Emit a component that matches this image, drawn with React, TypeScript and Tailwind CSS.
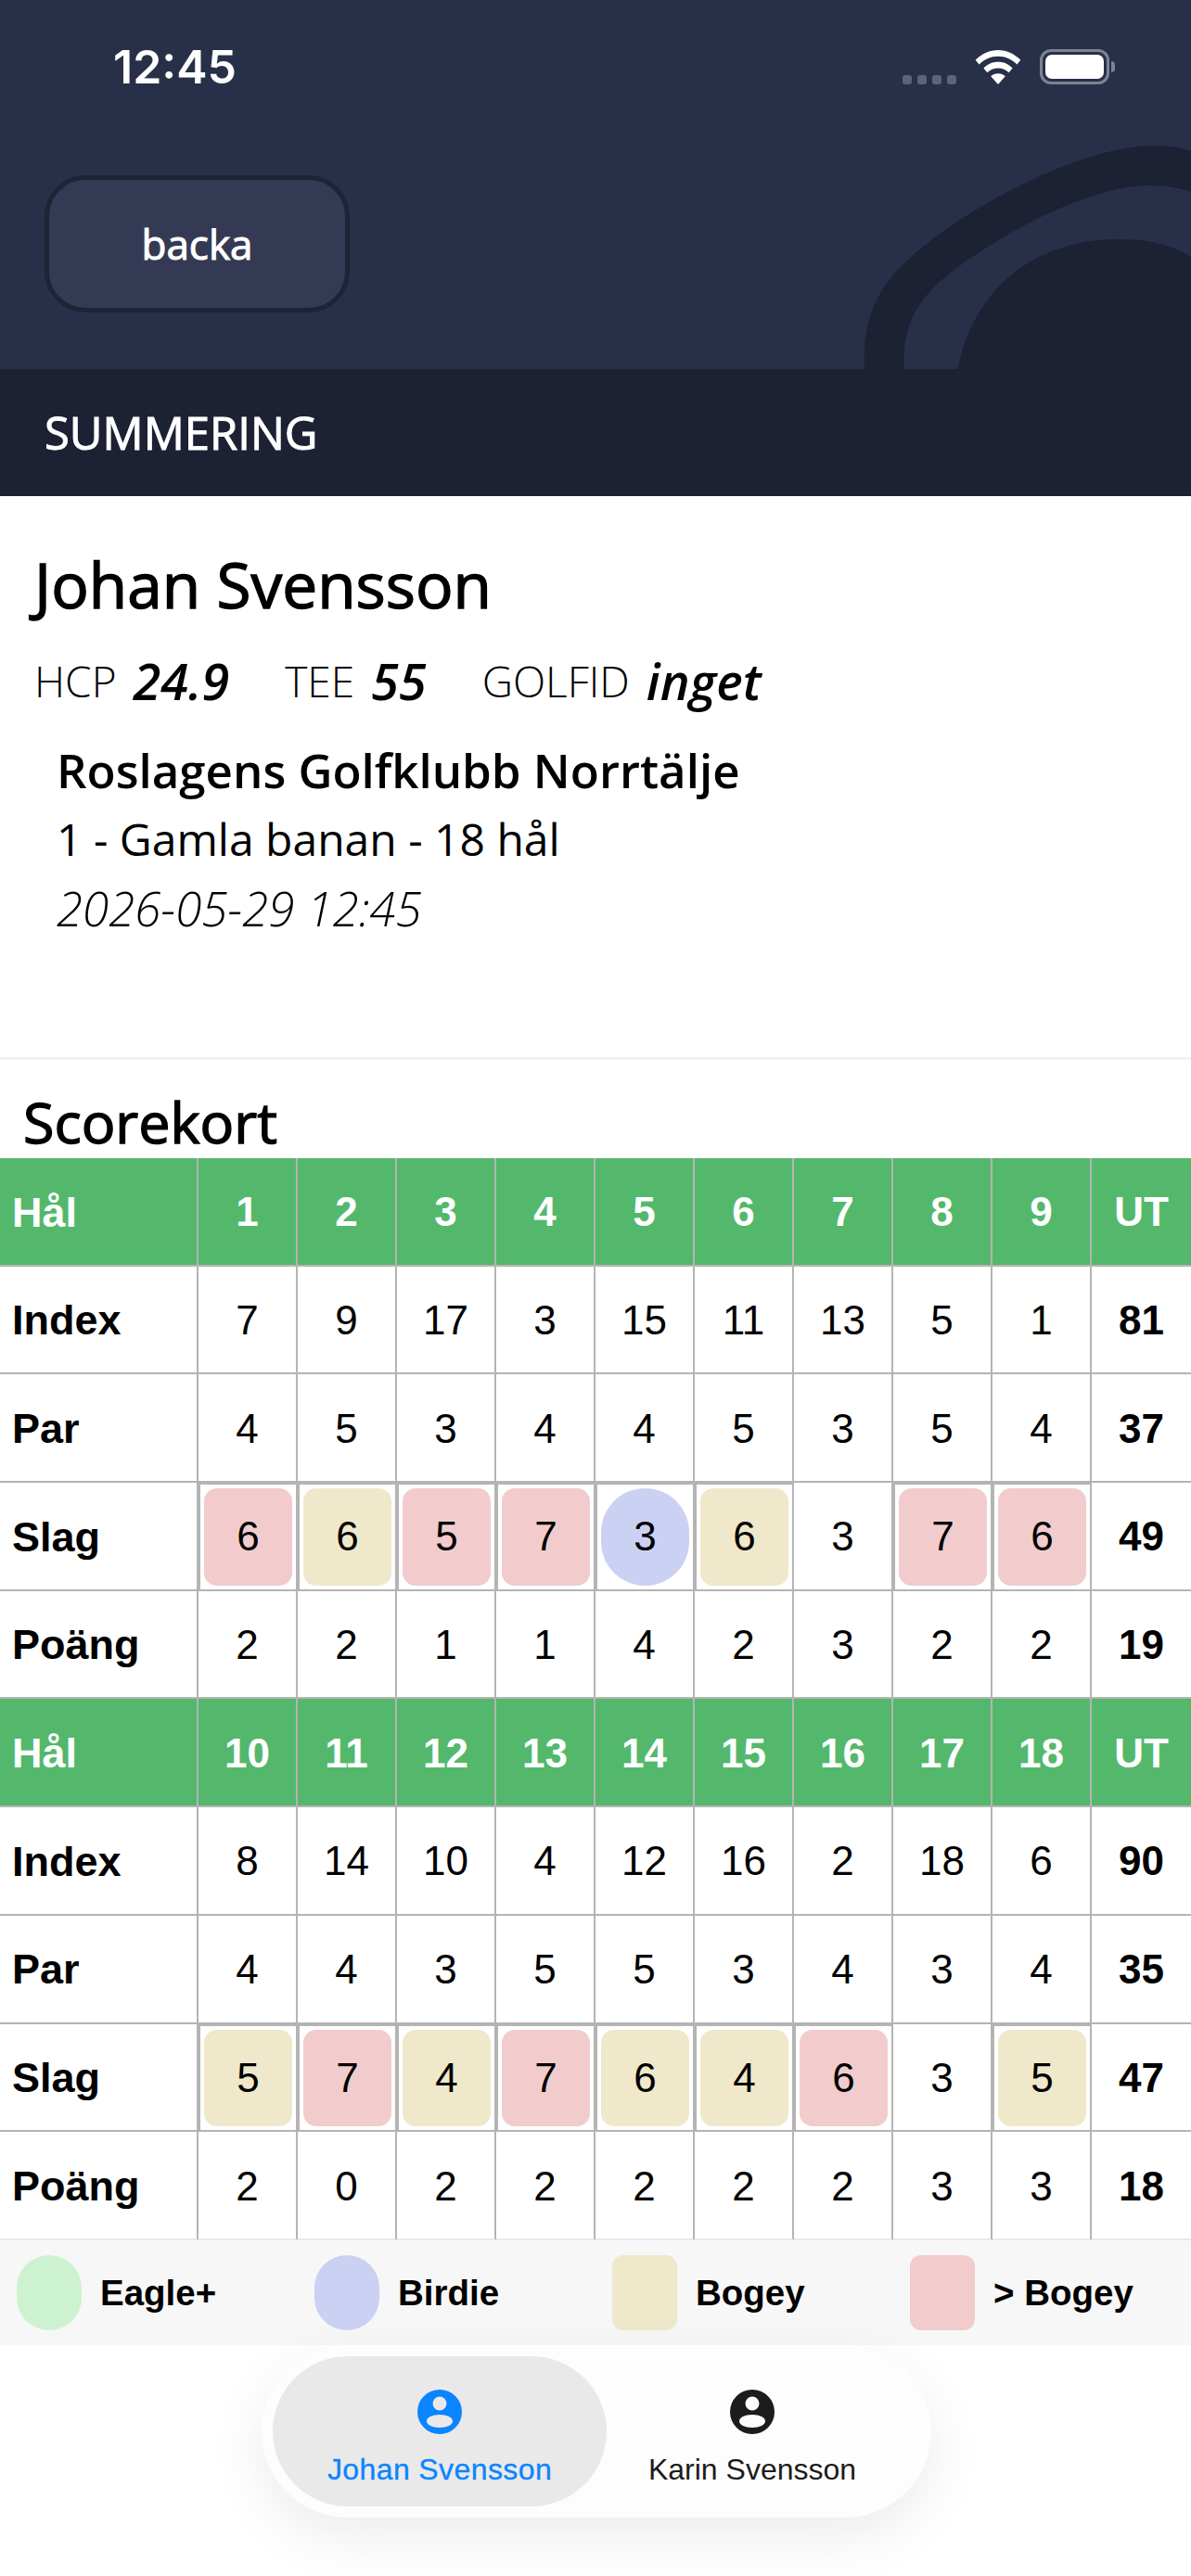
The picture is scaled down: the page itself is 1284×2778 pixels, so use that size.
import React from "react";

const sans = "font-['Open_Sans',sans-serif]";
const helv = "font-['Liberation_Sans',Arial,sans-serif]";
// the reference uses a medium cut that the regular face only reaches with a hairline stroke
const medium = "[-webkit-text-stroke:1px_currentColor]";
const mediumLarge = "[-webkit-text-stroke:1.4px_currentColor]";

type Mark = "r" | "b" | "c" | "";

const nines = [
  {
    holes: ["1", "2", "3", "4", "5", "6", "7", "8", "9", "UT"],
    index: ["7", "9", "17", "3", "15", "11", "13", "5", "1", "81"],
    par: ["4", "5", "3", "4", "4", "5", "3", "5", "4", "37"],
    slag: ["6", "6", "5", "7", "3", "6", "3", "7", "6", "49"],
    marks: ["r", "b", "r", "r", "c", "b", "", "r", "r", ""] as Mark[],
    points: ["2", "2", "1", "1", "4", "2", "3", "2", "2", "19"],
  },
  {
    holes: ["10", "11", "12", "13", "14", "15", "16", "17", "18", "UT"],
    index: ["8", "14", "10", "4", "12", "16", "2", "18", "6", "90"],
    par: ["4", "4", "3", "5", "5", "3", "4", "3", "4", "35"],
    slag: ["5", "7", "4", "7", "6", "4", "6", "3", "5", "47"],
    marks: ["b", "r", "b", "r", "b", "b", "r", "", "b", ""] as Mark[],
    points: ["2", "0", "2", "2", "2", "2", "2", "3", "3", "18"],
  },
];

const rowClass = "grid h-[116.7px] grid-cols-[214px_repeat(9,107px)_1fr]";

function Row({ label, values, head, last }: { label: string; values: string[]; head?: boolean; last?: boolean }) {
  const line = last ? "border-b-[#e8e8e8]" : "";
  return (
    <div className={`${rowClass} ${head ? "bg-[#54b86c] text-white" : "bg-white text-black"}`}>
      <div className={`flex items-center border-r-2 border-b-2 border-[#b4b4b4] pt-[2px] pl-[13px] text-[45px] font-bold ${line}`}>{label}</div>
      {values.map((v, i) => (
        <div
          key={i}
          className={`flex items-center justify-center border-b-2 border-[#b4b4b4] pt-[2px] text-[44px] ${line} ${i < 9 ? "border-r-2" : ""} ${i === 9 || head ? "font-bold" : ""}`}
        >
          {v}
        </div>
      ))}
    </div>
  );
}

function SlagRow({ values, marks }: { values: string[]; marks: Mark[] }) {
  return (
    <div className={`${rowClass} bg-white text-black`}>
      <div className="flex items-center border-r-2 border-b-2 border-[#b4b4b4] pt-[2px] pl-[13px] text-[45px] font-bold">Slag</div>
      {values.map((v, i) => {
        const m = marks[i];
        if (i === 9) {
          return (
            <div key={i} className="flex items-center justify-center border-b-2 border-[#b4b4b4] pt-[2px] text-[44px] font-bold">
              {v}
            </div>
          );
        }
        if (!m) {
          return (
            <div key={i} className="flex items-center justify-center border-r-2 border-b-2 border-[#b4b4b4] pt-[2px] text-[44px]">
              {v}
            </div>
          );
        }
        return (
          <div key={i} className="border-2 border-[#b4b4b4] p-[4px] text-[44px]">
            <div
              className={`flex h-full items-center justify-center ${
                m === "r" ? "rounded-[14px] bg-[#f2cccc]" : m === "b" ? "rounded-[14px] bg-[#f0e8ca]" : "rounded-full bg-[#cbd1f2]"
              }`}
            >
              {v}
            </div>
          </div>
        );
      })}
    </div>
  );
}

function LegendItem({ label, shape }: { label: string; shape: string }) {
  return (
    <div className="flex items-center gap-[20px] pl-[18px]">
      <div className={`h-[81px] w-[70px] ${shape}`} />
      <span className="text-[38.5px] font-bold text-black">{label}</span>
    </div>
  );
}

function PersonIcon() {
  return (
    <svg width="48" height="48" viewBox="0 0 48 48" fill="currentColor" fillRule="evenodd">
      <path d="M24 0 A24 24 0 1 1 24 48 A24 24 0 1 1 24 0 Z M24 7.5 A7.5 7.5 0 1 0 24 22.5 A7.5 7.5 0 1 0 24 7.5 Z M24 27 C16 27 10 30 10 34 C10 38 16 41 24 41 C32 41 38 38 38 34 C38 30 32 27 24 27 Z" />
    </svg>
  );
}

function Tab({ label, active }: { label: string; active?: boolean }) {
  return (
    <div
      className={`flex h-[162px] shrink-0 flex-col items-center justify-start rounded-[81px] pt-[36px] ${
        active ? "w-[360px] bg-[#e9e9e9] text-[#0a84ff]" : "w-[314px] text-[#1c1c1c]"
      }`}
    >
      <PersonIcon />
      <span className={`mt-[19px] text-[32px] leading-[38px] ${active ? "tracking-[0.4px] [-webkit-text-stroke:0.3px_currentColor]" : ""}`}>{label}</span>
    </div>
  );
}

export default function App() {
  return (
    <div className={`relative h-[2778px] w-[1284px] overflow-hidden bg-white ${sans}`}>
      {/* header */}
      <div className="relative h-[398px] overflow-hidden bg-[#283049]">
        <svg className="absolute right-0 bottom-0" width="384" height="258" viewBox="900 140 384 258" fill="#1c2133">
          <path d="M932 398 C930 340 945 305 1000 262 C1060 215 1170 157 1245 157 C1260 157 1272 159 1284 163 L1284 207 C1270 202 1255 200 1240 200 C1180 200 1090 245 1030 290 C990 320 972 350 975 398 Z" />
          <path d="M1033 398 C1042 340 1090 258 1207 258 C1240 258 1265 265 1284 277 L1284 398 Z" />
        </svg>
        <div className="relative flex h-[146px] items-start justify-between pt-[44px] pr-[82px] pl-[122px]">
          <span className="font-['Inter',sans-serif] text-[50px] leading-[56px] font-semibold text-white">12:45</span>
          <div className="flex items-start gap-[20px] pt-[9px]">
            <div className="mt-[28px] flex gap-[6px]">
              <span className="size-[10px] rounded-[3px] bg-white/25" />
              <span className="size-[10px] rounded-[3px] bg-white/25" />
              <span className="size-[10px] rounded-[3px] bg-white/25" />
              <span className="size-[10px] rounded-[3px] bg-white/25" />
            </div>
            <svg className="mt-[1px]" width="50" height="37" viewBox="0 0 50 38" fill="white">
              <path d="M25 0 C34 0 43 4 50 11 L46 16 C40 10 33 7 25 7 C17 7 10 10 4 16 L0 11 C7 4 16 0 25 0 Z" />
              <path d="M25 13 C31 13 36 15 41 20 L37 25 C33 21 29 20 25 20 C21 20 17 21 13 25 L9 20 C14 15 19 13 25 13 Z" />
              <path d="M25 26 C28 26 31 27 33 29 L25 38 L17 29 C19 27 22 26 25 26 Z" />
            </svg>
            <div className="flex items-center">
              <div className="flex h-[38px] w-[75px] rounded-[12px] border-[3px] border-white/40 p-[3px]">
                <div className="flex-1 rounded-[7px] bg-white" />
              </div>
              <div className="ml-[2px] h-[12px] w-[4px] rounded-r-full bg-white/40" />
            </div>
          </div>
        </div>
        <div className={`relative mt-[43px] ml-[48px] flex h-[148px] w-[329px] items-center justify-center rounded-[44px] border-[5px] border-[#1e2336] bg-[#353a54] text-[44px] text-white ${medium}`}>
          backa
        </div>
      </div>
      <div className={`flex h-[137px] items-center bg-[#1c2133] pl-[48px] text-[49px] text-white ${medium}`}>SUMMERING</div>

      {/* player */}
      <div className="h-[608px] border-b-[3px] border-[#f1f1f5] pt-[55px] pl-[37px] text-black">
        <div className={`text-[67.5px] leading-[80px] ${mediumLarge}`}>Johan Svensson</div>
        <div className="mt-[29px] flex h-[70px] items-center text-[46px] font-light">
          <span>HCP</span>
          <span className="ml-[18px] text-[54px] font-semibold italic">24.9</span>
          <span className="ml-[60px]">TEE</span>
          <span className="ml-[18px] text-[54px] font-semibold italic">55</span>
          <span className="ml-[60px]">GOLFID</span>
          <span className="ml-[18px] text-[54px] font-semibold italic">inget</span>
        </div>
        <div className="mt-[24px] pl-[24px]">
          <div className="text-[51px] leading-[75px] font-semibold">Roslagens Golfklubb Norrtälje</div>
          <div className="text-[48px] leading-[74px]">1 - Gamla banan - 18 hål</div>
          <div className="text-[51px] leading-[74px] font-light italic">2026-05-29 12:45</div>
        </div>
      </div>

      {/* scorecard */}
      <div className={`flex h-[106px] items-end pb-[4px] pl-[25px] text-[61px] leading-[70px] text-black ${mediumLarge}`}>Scorekort</div>
      <div className={helv}>
        {nines.map((n, i) => (
          <div key={n.holes[0]}>
            <Row label="Hål" values={n.holes} head />
            <Row label="Index" values={n.index} />
            <Row label="Par" values={n.par} />
            <SlagRow values={n.slag} marks={n.marks} />
            <Row label="Poäng" values={n.points} last={i === 1} />
          </div>
        ))}
        <div className="grid h-[113px] grid-cols-4 items-center bg-[#f7f7f7]">
          <LegendItem label="Eagle+" shape="rounded-full bg-[#cdf2cf]" />
          <LegendItem label="Birdie" shape="rounded-full bg-[#cbd1f2]" />
          <LegendItem label="Bogey" shape="rounded-[12px] bg-[#f0e8ca]" />
          <LegendItem label="> Bogey" shape="rounded-[12px] bg-[#f2cccc]" />
        </div>
        {/* tab bar */}
        <div className="flex justify-center">
          <div className="ml-[2px] flex h-[186px] w-[722px] items-center rounded-[93px] bg-[#fdfdfd] px-[12px] shadow-[0_20px_60px_rgba(0,0,0,0.08)]">
            <Tab label="Johan Svensson" active />
            <Tab label="Karin Svensson" />
          </div>
        </div>
      </div>
    </div>
  );
}
